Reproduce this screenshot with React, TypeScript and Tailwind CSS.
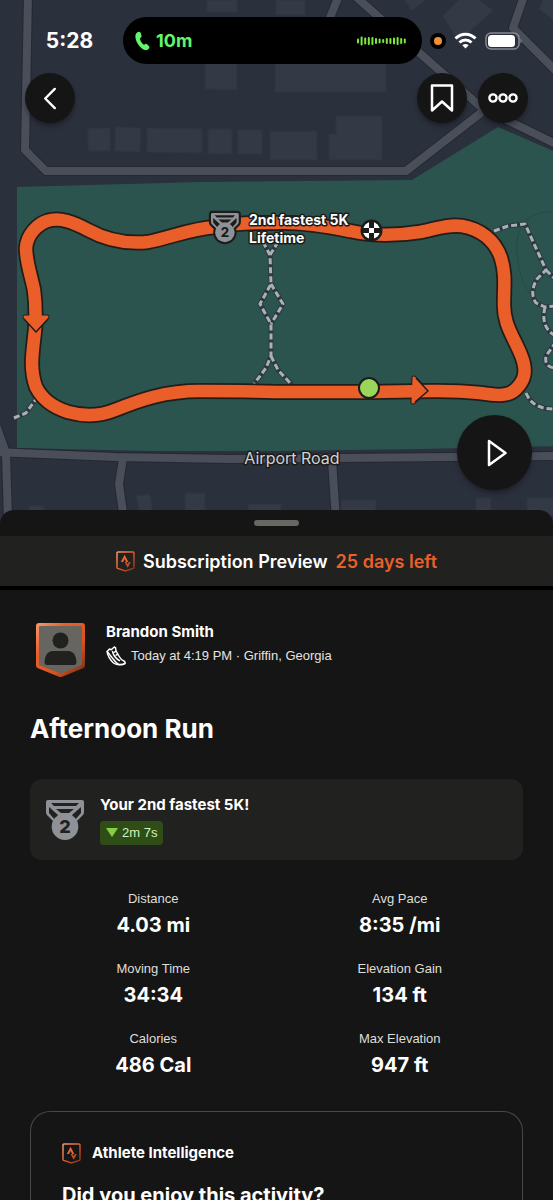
import type { ReactNode } from 'react';

const stats = [
  { label: 'Distance', value: '4.03 mi' },
  { label: 'Avg Pace', value: '8:35 /mi' },
  { label: 'Moving Time', value: '34:34' },
  { label: 'Elevation Gain', value: '134 ft' },
  { label: 'Calories', value: '486 Cal' },
  { label: 'Max Elevation', value: '947 ft' },
];

const waveBars = [5, 9, 7, 8, 8, 6, 5, 4, 6, 6, 7, 8, 6, 5];

const ROADS = [
  'M28 -4L25 150L46 171H406L482 112',
  'M338 -2L325 30',
  'M355 -4L482 108L515 124L560 146',
  'M524 -4L513 28L560 75',
  'M-4 425L6 453L8 520',
  'M-4 452L115 457L230 459L560 456',
  'M123 458L119 484L124 520',
  'M332 460L336 520',
];

const BUILDINGS = [
  'M88 128h22v23h-22z',
  'M115 127l26 1-1 24-25-1z',
  'M147 128l55 1v24l-55-1z',
  'M208 129h24v25h-24z',
  'M238 130h24v24h-24z',
  'M270 131h47v29h-47z',
  'M207 0h30v12h-30zM205 55h32v35l-32-1z',
  'M276 0h29v15h-29zM275 55h111v37H275z',
  'M336 116h46v44h-53v-26h7z',
  'M402 -4h28l-18 15zM467 -8l26 18-34 32-16-26z',
  'M544 -4h12v26l-17-13z',
  'M29 506h15v10H29zM136 496l14-2 3 22h-12z',
  'M185 493h20v22h-20zM248 504h33v12h-33z',
  'M341 500h35v16h-35zM476 498h15v18h-15zM527 498h30v18h-30z',
];

const TRAILS = [
  'M263 242L270 255L271 284L260 304L271 324L271 356L266 368L254 384',
  'M278 242L270 255',
  'M271 284L283 304L271 324',
  'M271 356L278 370L292 385',
  'M494 231L508 226L525 224L546 270L537 279Q529 293 536 303L545 307L556 306',
  'M546 270L556 280',
  'M545 307Q540 328 556 336',
  'M556 342L546 356Q544 368 556 368',
  'M526 393Q533 410 556 409',
  'M14 418L26 413L36 399',
];

const ROUTE =
  'M369 392C340 392 310 392 276 392C245 391 225 391 200 391C165 391 140 400 115 410C98 417 82 416 68 412C52 407 42 399 36 387C29 368 33 350 35 330C36 315 36 305 34 290C31 275 26 262 26 248C27 234 38 224 47 221C60 217 73 222 88 230C108 241 128 244 148 242C172 237 190 229 215 227C240 222 258 223 276 223C300 222 330 227 350 231C372 236 395 236 420 232C436 229 447 224 462 226C480 229 495 240 501 258C506 275 504 285 504 302C503 325 514 337 521 355C528 372 524 381 516 389C509 396 499 396 480 393C450 390 420 391 369 392';

const RIBBON =
  'M2 0h34q2 0 2 2v10q0 2-1 3l-7 7H8l-7-7q-1-1-1-3V2q0-2 2-2z';

interface IconProps {
  className?: string;
}

interface MedalShapeProps {
  cutout: string;
}

function MedalShape({ cutout }: MedalShapeProps) {
  return (
    <>
      <path d={RIBBON} fill="#8e9196" />
      <path d="M5 3h28l-3 3H8zM10 9h18l-5 4h-8zM3 7l9 8-3 5-6-7zM35 7l-9 8 3 5 6-7z" fill={cutout} />
      <circle cx="19" cy="26.700" r="13.300" fill="#8e9196" />
      <text x="19" y="33" textAnchor="middle" fontSize="18" fontWeight="800" fill={cutout}>
        2
      </text>
    </>
  );
}

function Medal({ className }: IconProps) {
  return (
    <svg viewBox="0 0 38 40" className={className} aria-hidden="true">
      <MedalShape cutout="#212120" />
    </svg>
  );
}

function BrandShield({ className }: IconProps) {
  return (
    <svg viewBox="0 0 19 21" className={className} fill="none" aria-hidden="true">
      <defs>
        <linearGradient id="shield" x1="0" y1="0" x2="1" y2="1">
          <stop offset="0" stopColor="#f39a72" />
          <stop offset="0.450" stopColor="#e8602c" />
          <stop offset="1" stopColor="#7a3115" />
        </linearGradient>
      </defs>
      <path
        d="M2 1h15a1 1 0 0 1 1 1v14.500a1 1 0 0 1-.6.9L9.500 20l-7.900-2.600a1 1 0 0 1-.6-.9V2a1 1 0 0 1 1-1z"
        stroke="url(#shield)"
        strokeWidth="1.500"
      />
      <path d="M8.600 3.800L4.800 11h2.300l1.500-2.900 1.500 2.900h2.200z" fill="#f0652f" />
      <path d="M8.600 11h1.900l1.200 2.300 1.100-2.300h1.900L11.700 16.800z" fill="#c9501f" />
    </svg>
  );
}

function ShoeIcon({ className }: IconProps) {
  return (
    <svg viewBox="0 0 20 20" className={className} fill="none" stroke="#fff" strokeWidth="1.500" strokeLinejoin="round" strokeLinecap="round" aria-hidden="true">
      <path d="M1.200 5.500L3.500 3 5.200 3.700 8.300 1 9.600 1.800C9.200 4.500 11 7 12.300 9c1.400 2.500 2.400 4.800 5.200 5.700 1.500.5 1.800 1.500 1.400 2.800-1.500 1.400-5.500 1.400-7.500 0C8.500 15.500 5 10 1.200 5.500z" />
      <path d="M1.200 5.500C.8 8.500 4.500 14.500 7.500 17c2.500 2 8 2.500 11.400.5M6.500 5.500c1 3.800 3.500 7.300 7 9.100M10 5.300L8.400 6.200M11.800 8.200l-1.700 1" />
    </svg>
  );
}

function PhoneIcon({ className }: IconProps) {
  return (
    <svg viewBox="0 0 15 20" className={className} fill="currentColor" aria-hidden="true">
      <path d="M1.600 2C3 .6 5 .4 5.600 1.800l.9 2.700c.3 1-.1 1.700-.9 2.200-.8.5-.8 1.200-.5 2 .7 1.800 1.700 3.300 3 4.500.6.5 1.200.6 1.900.1.800-.6 1.600-.6 2.300.1l1.700 1.900c.9 1.100.3 2.400-1 3.200-1.900 1.100-4.400.6-6.700-1.500C3.500 14.500 1.500 11.300.7 8 .1 5.300.3 3.300 1.600 2z" />
    </svg>
  );
}

function Avatar() {
  return (
    <svg viewBox="0 0 51 56" className="h-14 w-[51px] shrink-0" role="img" aria-label="Brandon Smith">
      <defs>
        <linearGradient id="frame" x1="0" y1="0" x2="1" y2="1">
          <stop offset="0" stopColor="#f59a6c" />
          <stop offset="0.300" stopColor="#ea5f29" />
          <stop offset="0.650" stopColor="#d9531f" />
          <stop offset="1" stopColor="#6b2a12" />
        </linearGradient>
      </defs>
      <path d="M4 1h43a3 3 0 0 1 3 3v39.500a3 3 0 0 1-2 2.800L27 54.700a4 4 0 0 1-3 0L3 46.300a3 3 0 0 1-2-2.800V4a3 3 0 0 1 3-3z" fill="url(#frame)" />
      <path d="M5 4h41a1 1 0 0 1 1 1v38L25.500 51.500 4 43V5a1 1 0 0 1 1-1z" fill="#66655f" />
      <circle cx="25.500" cy="18.500" r="8" fill="#212120" />
      <path d="M18 29h15c6 0 8 5 8.500 11 0 2-1 3-2.500 3H12c-1.500 0-2.500-1-2.500-3C10 34 12 29 18 29z" fill="#212120" />
    </svg>
  );
}

function RouteMap() {
  return (
    <svg
      viewBox="0 0 553 524"
      preserveAspectRatio="xMidYMin slice"
      className="absolute inset-0 h-full w-full"
      role="img"
      aria-label="Map of the run"
    >
      <rect width="553" height="524" fill="#2b303d" />
      {BUILDINGS.map((d) => (
        <path key={d} d={d} fill="#333a46" stroke="#2f3541" />
      ))}
      <path d="M17 187L200 182L412 180L498 127L560 154V446L420 449L276 451L150 451L17 448Z" fill="#2c544f" />
      <g fill="none" strokeLinejoin="round">
        {ROADS.map((d) => (
          <path key={d} d={d} stroke="#232833" strokeWidth="10" />
        ))}
        {ROADS.map((d) => (
          <path key={d} d={d} stroke="#4a4e59" strokeWidth="8" />
        ))}
        <path d="M560 212C530 210 516 222 517 250C518 275 525 290 536 298" stroke="#274a46" />
        {TRAILS.map((d) => (
          <path key={d} d={d} stroke="#2b3a42" strokeWidth="5" />
        ))}
        {TRAILS.map((d) => (
          <path key={d} d={d} stroke="#a9b1b4" strokeWidth="3" strokeDasharray="6 3" />
        ))}
        <path d={ROUTE} stroke="#221d19" strokeWidth="16" />
        <path d="M25 317L47 317L36 330Z" stroke="#221d19" strokeWidth="5" />
        <path d="M414 378L426 391L413 402Z" stroke="#221d19" strokeWidth="5" />
        <path d={ROUTE} stroke="#ea5f29" strokeWidth="12.500" />
      </g>
      {/* direction arrows */}
      <g fill="#ea5f29" stroke="#ea5f29" strokeWidth="3" strokeLinejoin="round">
        <path d="M25 317L47 317L36 330Z" />
        <path d="M414 378L426 391L413 402Z" />
      </g>
      <path
        d="M24 319L36 332L48 319M416 378L428 391L415 402"
        fill="none"
        stroke="#221d19"
        strokeWidth="1.500"
        strokeLinejoin="round"
      />

      <circle cx="369" cy="388" r="10" fill="#9ad65c" stroke="#1c1c1a" strokeWidth="2" />

      <clipPath id="flag">
        <circle cx="371.500" cy="230.500" r="8.500" />
      </clipPath>
      <circle cx="371.500" cy="230.500" r="11" fill="#1c1c1a" />
      <path
        d="M369 228h5v5h-5zM363 222h6v6h-6zM374 222h6v6h-6zM363 233h6v6h-6zM374 233h6v6h-6z"
        fill="#fff"
        clipPath="url(#flag)"
      />

      <g transform="translate(211 213) scale(0.730)">
        <path d={RIBBON} fill="#1c1c1a" stroke="#1c1c1a" strokeWidth="6" strokeLinejoin="round" />
        <circle cx="19" cy="26.700" r="16" fill="#1c1c1a" />
        <MedalShape cutout="#1c1c1a" />
      </g>

      <g stroke="#1c1c1a" strokeWidth="3" strokeLinejoin="round" className="[paint-order:stroke]">
        <text x="249" y="225" fontSize="14" fontWeight="700" fill="#fff">
          2nd fastest 5K
        </text>
        <text x="249" y="243" fontSize="14" fontWeight="700" fill="#fff">
          Lifetime
        </text>
        <text x="292" y="464" textAnchor="middle" fontSize="16" fill="#d0d2d6">
          Airport Road
        </text>
      </g>
    </svg>
  );
}

function StatusBar() {
  return (
    <div className="relative grid h-[47px] grid-cols-[123fr_299fr_131fr] items-center">
      <div className="pl-4 text-center text-[21px] font-bold text-white">5:28</div>
      <div className="flex h-full items-center rounded-full bg-black pr-4 pl-3 text-[#63f56b]">
        <PhoneIcon className="h-5 w-[15px]" />
        <span className="pl-[6px] text-[18px] font-bold">10m</span>
        <svg viewBox="0 0 49 10" className="ml-auto h-[10px] w-[49px]" fill="#7bea3c" aria-hidden="true">
          {waveBars.map((h, i) => (
            <rect key={i} x={i * 3.6} y={5 - h / 2} width="2" height={h} rx="1" />
          ))}
        </svg>
      </div>
      <div className="flex items-center pl-2">
        <span className="flex h-4 w-4 items-center justify-center rounded-full bg-black">
          <span className="h-2 w-2 rounded-full bg-[#f0913a]" />
        </span>
        <svg viewBox="0 0 23 17" className="ml-2 h-[17px] w-[23px]" fill="none" stroke="#fff" strokeWidth="3" aria-hidden="true">
          <path d="M1.500 6.500C7 .8 16 .8 21.500 6.500M5.500 10.500c3.500-3.500 8.500-3.500 12 0" />
          <path d="M11.500 16.500l-3.200-3.200q3.200-2.800 6.400 0z" fill="#fff" stroke="none" />
        </svg>
        <svg viewBox="0 0 38 18" className="ml-2 h-[18px] w-[38px]" aria-hidden="true">
          <rect x="1" y="1" width="33" height="16" rx="5" fill="none" stroke="#85888f" strokeWidth="1.500" />
          <rect x="3" y="3" width="27" height="12" rx="3.500" fill="#fff" />
          <path d="M35.500 6.500q2.500 2.500 0 5z" fill="#85888f" />
        </svg>
      </div>
    </div>
  );
}

interface RoundButtonProps {
  label: string;
  children: ReactNode;
}

function RoundButton({ label, children }: RoundButtonProps) {
  return (
    <button
      type="button"
      aria-label={label}
      className="flex h-[50px] w-[50px] items-center justify-center rounded-full bg-[#151515] shadow-md shadow-black/30"
    >
      {children}
    </button>
  );
}

function App() {
  return (
    <div className="flex h-screen flex-col overflow-hidden bg-[#151515] font-['Inter','Liberation_Sans',sans-serif] text-white">
      <header className="relative flex h-[524px] shrink-0 flex-col pt-[17px] pb-[34px]">
        <RouteMap />
        <StatusBar />
        <nav className="relative mt-[9px] flex items-center gap-[11px] px-[25px]">
          <RoundButton label="Back">
            <svg viewBox="0 0 14 24" className="h-[23px] w-[14px]" fill="none" stroke="#fff" strokeWidth="2.500" strokeLinecap="round" strokeLinejoin="round">
              <path d="M12 2L2 12l10 10" />
            </svg>
          </RoundButton>
          <span className="flex-1" />
          <RoundButton label="Save">
            <svg viewBox="0 0 24 28" className="h-7 w-6" fill="none" stroke="#fff" strokeWidth="2.500" strokeLinejoin="round">
              <path d="M2 1.500h20v25l-10-9-10 9z" />
            </svg>
          </RoundButton>
          <RoundButton label="More">
            <svg viewBox="0 0 30 10" className="h-[10px] w-[30px]" fill="none" stroke="#fff" strokeWidth="2.400">
              <circle cx="5" cy="5" r="3.600" />
              <circle cx="15" cy="5" r="3.600" />
              <circle cx="25" cy="5" r="3.600" />
            </svg>
          </RoundButton>
        </nav>
        <button
          type="button"
          aria-label="Play flyover"
          className="relative mt-auto mr-[21px] flex h-[75px] w-[75px] items-center justify-center self-end rounded-full bg-[#151515] shadow-md shadow-black/30"
        >
          <svg viewBox="0 0 20 28" className="ml-1 h-7 w-5" fill="none" stroke="#fff" strokeWidth="2.500" strokeLinejoin="round">
            <path d="M2 2l16.500 12L2 26z" />
          </svg>
        </button>
      </header>

      <main className="relative -mt-[14px] rounded-t-[14px] bg-[#151515]">
        <div className="mx-auto h-[26px] w-[45px] pt-[10px]">
          <div className="h-[6px] rounded-full bg-[#696763]" />
        </div>

        <div className="flex h-[54px] items-center justify-center gap-2 border-b-4 border-black bg-[#212120] text-[18px] font-semibold">
          <BrandShield className="h-[21px] w-[19px]" />
          <span>Subscription Preview</span>
          <span className="text-[#e8602c]">25 days left</span>
        </div>

        <section className="flex gap-5 pt-8 pl-[35px]">
          <Avatar />
          <div>
            <p className="text-[15px] leading-5 font-bold">Brandon Smith</p>
            <p className="mt-1 flex items-center gap-[5px] font-['Liberation_Sans',sans-serif] text-[13px] leading-5 text-[#e4e4e2]">
              <ShoeIcon className="h-5 w-5" />
              Today at 4:19 PM · Griffin, Georgia
            </p>
          </div>
        </section>

        <div className="px-[30px]">
          <h1 className="mt-8 text-[26px] leading-[38px] font-bold">Afternoon Run</h1>

          <section className="mt-[31px] flex h-[81px] items-center gap-4 rounded-xl bg-[#212120] pl-4">
            <Medal className="h-10 w-[38px]" />
            <div>
              <p className="text-[15px] leading-5 font-bold">Your 2nd fastest 5K!</p>
              <span className="mt-[6px] inline-flex h-6 items-center gap-1 rounded bg-[#2f4e17] px-[6px] font-['Liberation_Sans',sans-serif] text-[13px] text-[#d7f0bd]">
                <svg viewBox="0 0 12 9" className="h-[9px] w-3" aria-hidden="true">
                  <path d="M0 0h12L6 9z" fill="#85cf45" />
                </svg>
                2m 7s
              </span>
            </div>
          </section>

          <dl className="mt-[29px] grid grid-cols-2 gap-y-[18px] text-center">
            {stats.map((stat) => (
              <div key={stat.label}>
                <dt className="font-['Liberation_Sans',sans-serif] text-[13px] leading-5 text-[#deded9]">
                  {stat.label}
                </dt>
                <dd className="text-[20px] leading-8 font-bold">{stat.value}</dd>
              </div>
            ))}
          </dl>

          <section className="mt-[30px] rounded-t-[20px] border-x border-t border-[#484845] px-[31px] pt-[29px]">
            <div className="flex items-center gap-[11px]">
              <BrandShield className="h-[21px] w-[19px]" />
              <h2 className="text-[15px] leading-6 font-bold">Athlete Intelligence</h2>
            </div>
            <p className="mt-4 text-[20px] leading-7 font-bold">Did you enjoy this activity?</p>
          </section>
        </div>
      </main>
    </div>
  );
}

export default App;
